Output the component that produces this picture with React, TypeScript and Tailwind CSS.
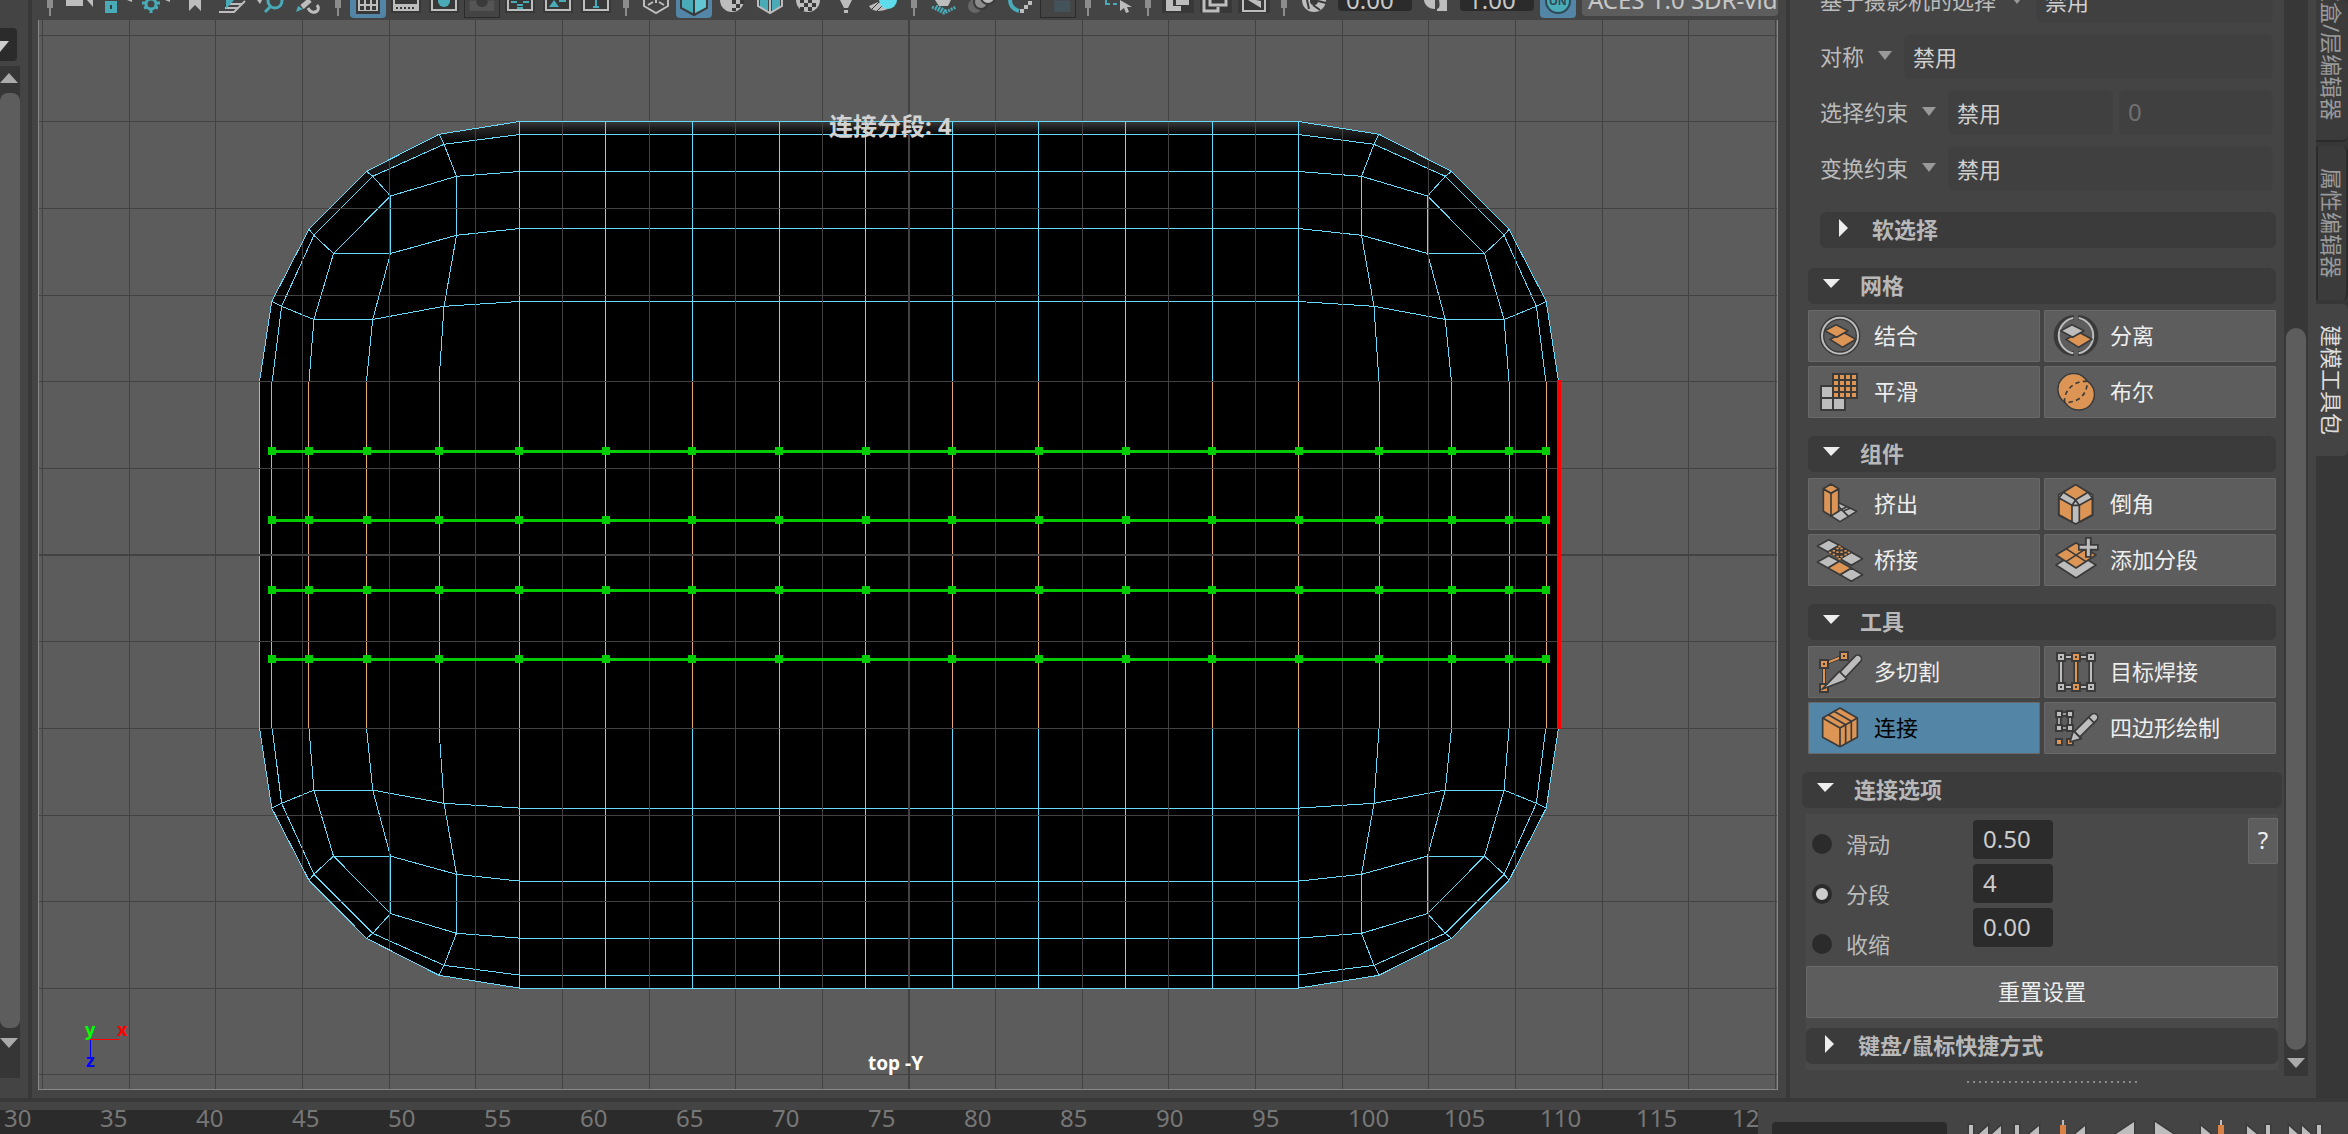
import React from "react";

type IconProps = { children: React.ReactNode };

type Tool = {
  label: string;
  icon: React.ReactNode;
  active?: boolean;
};

const CX = 909;
const CY = 554.8;
const STEP = 86.64;

const DARK = "#3a3a3a";
const ORANGE = "#dc9555";
const GRAY = "#bdbdbd";
const TEAL = "#4aabb8";

// top-left quarter of the mesh, mirrored for the other three corners
const OUTLINE = "259.5,381.5 271.8,301.3 309,229.3 366.5,171.3 439,134.3 519.5,121.5";
const CORNER_LINES = [
  "272.2,381.5 281.6,306.3 313.9,235.3 372.7,176.3 444,144.3 519.5,134.5",
  "309,381.5 313.9,319.5 333.5,253.5",
  "309,229.3 313.9,235.3 333.5,253.5 390.5,253.5 456.5,235.3 519.5,228.5",
  "333.5,253.5 390.5,196 456.5,176.3 519.5,171.5",
  "366.5,381.5 372.7,319.5 390.5,253.5 390.5,196 372.7,176.3 366.5,171.3",
  "439,381.5 444,306.3 456.5,235.3 456.5,176.3 444,144.3 439,134.3",
  "271.8,301.3 281.6,306.3 313.9,319.5 372.7,319.5 444,306.3 519.5,301.5",
];
const ROWS = [134.5, 171.5, 228.5, 301.5];
const EDGE_XS = [271.8, 308.8, 366.5, 439];
const COLS = Array.from({ length: 10 }, (_, i) => CX - 4.5 * STEP + i * STEP);
const MIDS = [...EDGE_XS, ...COLS, ...EDGE_XS.map((x) => 2 * CX - x).reverse()];
const CUTS = [1, 2, 3, 4].map((n) => 381.3 + n * 69.4);
const MIRRORS = [
  "",
  `translate(${2 * CX} 0) scale(-1 1)`,
  `translate(0 ${2 * CY}) scale(1 -1)`,
  `translate(${2 * CX} ${2 * CY}) scale(-1 -1)`,
];

const Viewport: React.FC = () => (
  <svg
    viewBox="39 20 1738 1069"
    preserveAspectRatio="xMidYMid slice"
    className="absolute inset-0 h-full w-full bg-[#5c5c5c]"
    fill="none"
    shapeRendering="crispEdges"
  >
    <defs>
      <linearGradient id="rim" x1="0" y1="0" x2="0" y2="1">
        <stop offset="0" stopColor="#383838" />
        <stop offset="1" stopColor="#000" />
      </linearGradient>
    </defs>
    {MIRRORS.map((m) => (
      <polygon key={m} transform={m} points={`${OUTLINE} 910,121.5 910,556 259.5,556`} fill="#000" />
    ))}
    <rect x="519" y="122" width="780" height="13" fill="url(#rim)" />
    {MIRRORS.slice(0, 2).map((m) => (
      <g key={m} transform={m}>
        <polygon points="519.5,121.5 439,134.3 444,144.3 519.5,134.5" fill="url(#rim)" />
        <polygon points="439,134.3 366.5,171.3 372.7,176.3 444,144.3" fill="#181818" />
        <polygon points="366.5,171.3 309,229.3 313.9,235.3 372.7,176.3" fill="#0c0c0c" />
      </g>
    ))}

    <g stroke="#67d9fb">
      {MIRRORS.map((m) => (
        <g key={m} transform={m}>
          {CORNER_LINES.map((p) => (
            <polyline key={p} points={p} />
          ))}
        </g>
      ))}
      {ROWS.map((y) => (
        <path key={y} d={`M519 ${y}H1299M519 ${2 * CY - y}H1299`} />
      ))}
      {COLS.map((x) => (
        <path key={x} d={`M${x} 121V382M${x} 728V988`} />
      ))}
    </g>
    <g stroke="#e9a873">
      <path d="M259.5 382V728" />
      {MIDS.map((x) => (
        <path key={x} d={`M${x} 382V728`} />
      ))}
    </g>

    <g stroke="#424242">
      {Array.from({ length: 21 }, (_, i) => i - 10).map((i) => (
        <path key={i} d={`M${CX + i * STEP} 20V1090`} strokeWidth={i === 0 ? 2 : 1} />
      ))}
      {Array.from({ length: 13 }, (_, i) => i - 6).map((i) => (
        <path key={i} d={`M39 ${CY + i * STEP + 0.3}H1778`} strokeWidth={i === 0 ? 2 : 1} />
      ))}
    </g>
    <g stroke="#67d9fb">
      {MIRRORS.map((m) => (
        <polyline key={m} transform={m} points={`${OUTLINE} 910,121.5`} />
      ))}
    </g>

    {CUTS.map((y) => (
      <g key={y}>
        <path d={`M272 ${y + 0.5}H1546`} stroke="#00cc00" strokeWidth="3" />
        {MIDS.map((x) => (
          <rect key={x} x={x - 4} y={y - 4} width="8" height="8" fill="#00cc00" />
        ))}
      </g>
    ))}
    <path d="M1559 380V729" stroke="#ff0000" strokeWidth="4" />

    <path d="M90 1039.5H119" stroke="#ff0000" />
    <path d="M90.5 1040V1058" stroke="#0000ff" />
    <g className="font-bold" fontSize="18">
      <text x="85" y="1036" fill="#00ff00">y</text>
      <text x="117" y="1036" fill="#ff0000">x</text>
      <text x="86" y="1067" fill="#0000ff">z</text>
    </g>
    <text x="868" y="1070" fontSize="19" fill="#fff" className="font-bold">top -Y</text>
    <text x="829" y="135" fontSize="24" fill="#d2d2d2" className="font-bold">连接分段: 4</text>
  </svg>
);

/* ---------- tool button icons ---------- */

const ToolIcon: React.FC<IconProps> = ({ children }) => (
  <svg viewBox="0 0 144 156" className="h-13 w-12 shrink-0" fill="none" stroke={DARK} strokeWidth="5" strokeLinejoin="round">
    {children}
  </svg>
);

const Vertex: React.FC<{ x: number; y: number; color?: string }> = ({ x, y, color = GRAY }) => (
  <g stroke="none">
    <rect x={x - 15} y={y - 15} width="30" height="30" fill={DARK} />
    <rect x={x - 9} y={y - 9} width="18" height="18" fill={color} />
    <rect x={x - 3} y={y - 3} width="6" height="6" fill={DARK} />
  </g>
);

const CombineIcon = () => (
  <ToolIcon>
    <circle cx="72" cy="77" r="54" strokeWidth="14" />
    <circle cx="72" cy="77" r="54" stroke={GRAY} strokeWidth="6" />
    <path d="M42 88L84 68L120 88L80 112Z" fill={ORANGE} />
    <path d="M26 62L60 44L96 62L62 82Z" fill={ORANGE} />
  </ToolIcon>
);

const SeparateIcon = () => (
  <ToolIcon>
    <path d="M66 23A54 54 0 0 0 66 131M78 23A54 54 0 0 1 78 131" strokeWidth="14" />
    <path d="M64 24A54 54 0 0 0 64 130M80 24A54 54 0 0 1 80 130" stroke={GRAY} strokeWidth="6" />
    <path d="M42 88L84 68L120 88L80 112Z" fill={ORANGE} />
    <path d="M26 62L60 44L96 62L62 82Z" fill={GRAY} />
  </ToolIcon>
);

const SmoothIcon = () => (
  <ToolIcon>
    <g stroke="none">
      <path d="M12 57H60V93H90V135H12Z" fill={DARK} />
      <path d="M18 63h30v30h-30zM18 99h30v30h-30zM54 99h30v30h-30z" fill={GRAY} />
      <rect x="48" y="21" width="78" height="78" fill={DARK} />
      {[27, 45, 63, 81].map((y) =>
        [54, 72, 90, 108].map((x) => <rect key={`${x}-${y}`} x={x} y={y} width="12" height="12" fill={ORANGE} />)
      )}
    </g>
  </ToolIcon>
);

const BooleanIcon = () => (
  <ToolIcon>
    <circle cx="65" cy="70" r="47" />
    <circle cx="80" cy="85" r="47" />
    <circle cx="65" cy="70" r="45" fill={ORANGE} stroke="none" />
    <circle cx="80" cy="85" r="45" fill={ORANGE} stroke="none" />
    <path d="M38 109C34 80 60 44 104 46C110 74 86 112 38 109Z" strokeDasharray="13 10" />
  </ToolIcon>
);

const ExtrudeIcon = () => (
  <ToolIcon>
    <path d="M68 74L122 100L72 131L45 114Z" fill={GRAY} />
    <path d="M56 106L92 86M68 86L98 116M84 98L104 90" />
    <path d="M22 32L45 46V114L22 100ZM45 46L68 32V100L45 114Z" fill={ORANGE} />
    <path d="M45 18L68 32L45 46L22 32Z" fill={ORANGE} />
  </ToolIcon>
);

const BevelIcon = () => (
  <ToolIcon>
    <path d="M71 20L122 50V112L71 138L20 112V50Z" fill={GRAY} />
    <path d="M71 20L108 43L71 65L34 43Z" fill={ORANGE} />
    <path d="M21 60L60 82V132L21 110ZM121 60L82 82V132L121 110Z" fill={ORANGE} />
    <path d="M60 82L71 67L82 82ZM71 65L60 82M34 43L21 60M108 43L121 60" />
  </ToolIcon>
);

const BRIDGE_DOTS = [
  [53, 50], [64, 43], [76, 43], [88, 50], [42, 55], [64, 54], [76, 54], [98, 55],
  [53, 61], [64, 67], [76, 67], [88, 61], [70, 37], [70, 74],
];

const BridgeIcon = () => (
  <ToolIcon>
    <path d="M4 36L38 17L70 34L36 54ZM72 74L106 55L140 74L106 94Z" fill={GRAY} />
    <path d="M36 54L70 34L106 55L72 74Z" fill={DARK} />
    {BRIDGE_DOTS.map(([x, y]) => (
      <rect key={`${x}-${y}`} x={x - 3} y={y - 2} width="7" height="5" fill={ORANGE} stroke="none" />
    ))}
    <path d="M4 84L38 65L70 82L36 102ZM72 122L106 102L140 122L106 142Z" fill={GRAY} />
    <path d="M36 102L70 82L106 102L72 122Z" fill={ORANGE} />
  </ToolIcon>
);

const AddDivisionsIcon = () => (
  <ToolIcon>
    <path d="M12 93L72 56L132 93L72 132Z" fill={GRAY} />
    <path d="M12 63L72 26L132 63L72 102Z" fill={ORANGE} />
    <path d="M42 44L102 83M102 44L42 83" />
    <path d="M109 9V71M78 40H140" strokeWidth="20" />
    <path d="M109 14V66M83 40H135" stroke={GRAY} strokeWidth="9" />
  </ToolIcon>
);

const MultiCutIcon = () => (
  <ToolIcon>
    <path d="M24 54V126M24 54L84 30" strokeWidth="12" />
    <path d="M24 54V126M24 54L84 30" stroke={ORANGE} strokeWidth="6" />
    <Vertex x={24} y={54} color={ORANGE} />
    <Vertex x={84} y={30} color={ORANGE} />
    <Vertex x={24} y={126} color={ORANGE} />
    <path d="M84 82L125 39" strokeWidth="28" strokeLinecap="round" />
    <path d="M84 82L125 39" stroke={GRAY} strokeWidth="18" strokeLinecap="round" />
    <path d="M18 130L70 76L92 98L84 104Z" fill={GRAY} />
  </ToolIcon>
);

const TargetWeldIcon = () => (
  <ToolIcon>
    <path d="M27 33V123M72 33V123M117 33V123M27 33H117M27 123H117" strokeWidth="16" />
    <path d="M27 33V123M117 33V123M27 33H117M27 123H117" stroke={GRAY} strokeWidth="6" />
    <path d="M72 33V123" stroke={ORANGE} strokeWidth="6" />
    {[27, 72, 117].map((x) => (
      <g key={x}>
        <Vertex x={x} y={33} color={x === 72 ? ORANGE : GRAY} />
        <Vertex x={x} y={123} color={x === 72 ? ORANGE : GRAY} />
      </g>
    ))}
  </ToolIcon>
);

const ConnectIcon = () => (
  <ToolIcon>
    <path d="M72 18L124 48V106L72 134L20 106V48Z" fill={ORANGE} />
    <path d="M20 48L72 78L124 48M72 78V134M37 38L89 68V124M54 28L106 58V115" />
  </ToolIcon>
);

const QuadDrawIcon = () => (
  <ToolIcon>
    <path d="M21 36H54V78H21Z" strokeWidth="16" />
    <path d="M21 36H54V78H21Z" stroke={GRAY} />
    <g stroke="none">
      {[[21, 36], [54, 36], [21, 78], [54, 78]].map(([x, y]) => (
        <g key={`${x}-${y}`}>
          <rect x={x - 12} y={y - 12} width="24" height="24" fill={DARK} />
          <rect x={x - 6} y={y - 6} width="12" height="12" fill={GRAY} />
        </g>
      ))}
      <path d="M9 108h24v24H9zM42 108h24v24H42z" fill={DARK} />
      <path d="M15 114h12v12H15zM48 114h12v12H48z" fill={ORANGE} />
    </g>
    <path d="M78 94L126 46" strokeWidth="28" strokeLinecap="round" />
    <path d="M78 94L126 46" stroke={GRAY} strokeWidth="18" strokeLinecap="round" />
    <path d="M54 120L64 86L88 110Z" fill={GRAY} />
    <path d="M64 86L88 110M108 44L128 64" />
  </ToolIcon>
);

const meshTools: Tool[] = [
  { label: "结合", icon: <CombineIcon /> },
  { label: "分离", icon: <SeparateIcon /> },
  { label: "平滑", icon: <SmoothIcon /> },
  { label: "布尔", icon: <BooleanIcon /> },
];

const componentTools: Tool[] = [
  { label: "挤出", icon: <ExtrudeIcon /> },
  { label: "倒角", icon: <BevelIcon /> },
  { label: "桥接", icon: <BridgeIcon /> },
  { label: "添加分段", icon: <AddDivisionsIcon /> },
];

const editTools: Tool[] = [
  { label: "多切割", icon: <MultiCutIcon /> },
  { label: "目标焊接", icon: <TargetWeldIcon /> },
  { label: "连接", icon: <ConnectIcon />, active: true },
  { label: "四边形绘制", icon: <QuadDrawIcon /> },
];

/* ---------- panel toolbar ---------- */

const Cell: React.FC<{ label: string; on?: boolean; off?: boolean; children: React.ReactNode }> = ({ label, on, off, children }) => (
  <button
    aria-label={label}
    className={`h-[18px] w-9 shrink-0 ${on ? "rounded-b-sm bg-[#5285a6]" : ""} ${off ? "border border-t-0 border-[#2b2b2b]" : ""}`}
  >
    <svg viewBox="0 0 36 18" className="h-[18px] w-full" fill="none" stroke={GRAY} strokeWidth="2">
      {children}
    </svg>
  </button>
);

const Separator = () => (
  <div className="flex h-4 w-5 shrink-0 flex-col items-center">
    <div className="h-2 w-1.5 bg-[#8c8c8c]" />
    <div className="h-2 w-0.5 bg-[#8c8c8c]" />
  </div>
);

const Backing: React.FC<{ w?: number }> = ({ w = 30 }) => (
  <rect x={18 - w / 2} y="0" width={w} height="13" fill="#383838" stroke="none" />
);

const ToolbarValue: React.FC<{ label: string; value: string }> = ({ label, value }) => (
  <input
    aria-label={label}
    defaultValue={value}
    className="mx-1 -mt-5 h-[31px] w-[74px] shrink-0 rounded-sm bg-[#2b2b2b] pt-2 pl-2 text-2xl leading-6 text-[#c8c8c8]"
  />
);

const Toolbar: React.FC = () => (
  <div className="flex h-5 items-start gap-0.5 overflow-hidden pl-2">
    <Separator />
    <Cell label="摄影机">
      <path d="M4 0H21V6H4ZM25 0L31 7V0Z" fill={GRAY} stroke="none" />
    </Cell>
    <Cell label="锁定摄影机">
      <rect x="5" y="1" width="12" height="12" fill={TEAL} stroke="none" />
      <path d="M11 5V9" stroke={DARK} />
      <path d="M27 0H32V2Z" fill={GRAY} stroke="none" />
    </Cell>
    <Cell label="摄影机属性">
      <circle cx="13" cy="4" r="5" stroke={TEAL} strokeWidth="3" />
      <path d="M13 9V13M6 8L9 7M20 8L17 7M4 3H8M22 3H18" stroke={TEAL} strokeWidth="3" />
      <path d="M27 0H32V2Z" fill={GRAY} stroke="none" />
    </Cell>
    <Cell label="书签">
      <path d="M13 0H25V11L19 5L13 11Z" fill={GRAY} stroke="none" />
    </Cell>
    <Cell label="图像平面">
      <path d="M5 12H20L31 1M11 8H24M14 4H28" />
      <path d="M12 9V0H20Z" fill={TEAL} stroke="none" />
    </Cell>
    <Cell label="二维平移/缩放">
      <circle cx="23" cy="1" r="7" stroke={TEAL} strokeWidth="3" />
      <path d="M18 7L13 12" stroke={TEAL} strokeWidth="3" />
      <path d="M5 0H10L8 4Z" fill={GRAY} stroke="none" />
    </Cell>
    <Cell label="油性铅笔">
      <path d="M20 0L12 7" strokeWidth="5" />
      <path d="M18 8C22 16 32 11 27 5" strokeWidth="3" />
      <path d="M6 12L8 6L13 9Z" fill={TEAL} stroke="none" />
    </Cell>
    <Separator />
    <Cell label="栅格" on>
      <rect x="6" y="0" width="24" height="14" fill="#383838" stroke="none" />
      <path d="M8 0H28V11H8Z" fill={GRAY} stroke="none" />
      <path d="M10 0h4v4h-4zM16 0h4v4h-4zM22 0h4v4h-4zM10 6h4v4h-4zM16 6h4v4h-4zM22 6h4v4h-4z" fill="#383838" stroke="none" />
    </Cell>
    <Cell label="胶片门">
      <Backing />
      <path d="M5 0H31V11H5Z" fill={GRAY} stroke="none" />
      <path d="M7 0H29V4H7ZM8 7h2v2h-2zM12 7h2v2h-2zM16 7h2v2h-2zM20 7h2v2h-2zM24 7h2v2h-2z" fill="#383838" stroke="none" />
    </Cell>
    <Cell label="分辨率门">
      <Backing />
      <path d="M6 0V10H30V0" />
      <circle cx="18" cy="1" r="6" fill={TEAL} stroke="none" />
    </Cell>
    <Cell label="门遮罩" off>
      <rect x="5" y="0" width="26" height="11" fill="#555" stroke="none" />
      <circle cx="18" cy="1" r="6" fill={DARK} stroke="none" />
    </Cell>
    <Cell label="区域图">
      <Backing />
      <path d="M6 0V10H30V0" />
      <path d="M9 2H15M21 2H27M15 5H21M15 8H21" stroke={TEAL} />
    </Cell>
    <Cell label="安全动作">
      <Backing />
      <path d="M6 0V10H30V0" />
      <path d="M9 7L14 0L19 7ZM19 0H26V2H19Z" fill={TEAL} stroke="none" />
    </Cell>
    <Cell label="安全标题">
      <Backing />
      <path d="M6 0V10H30V0" />
      <path d="M18 0V7M15 7H21" stroke={TEAL} />
    </Cell>
    <Separator />
    <Cell label="线框">
      <path d="M6 0V6L18 13L30 6V0M18 0V3M10 5L15 2M26 5L21 2" />
    </Cell>
    <Cell label="平滑着色" on>
      <path d="M5 0H18V15L5 8Z" fill={TEAL} stroke="none" />
      <path d="M31 0H18V15L31 8Z" fill="#62c5d2" stroke="none" />
      <path d="M5 0V8L18 15L31 8V0M18 0V15" stroke={DARK} />
    </Cell>
    <Cell label="默认材质">
      <path d="M6 0A12 12 0 0 0 30 0Z" fill={GRAY} stroke="none" />
      <path d="M18 0H22V4H18ZM22 4H26V8H22ZM26 0H30V4H26ZM18 8H22V11H18Z" fill={DARK} stroke="none" />
    </Cell>
    <Cell label="着色对象上的线框">
      <path d="M8 0H16V11L8 7ZM20 0H28V7L20 11Z" fill={TEAL} stroke="none" />
      <path d="M6 0V6L18 13L30 6V0M18 0V12" />
    </Cell>
    <Cell label="带纹理">
      <path d="M6 0A12 12 0 0 0 30 0Z" fill={GRAY} stroke="none" />
      <path d="M10 0h4v3h-4zM18 0h4v3h-4zM14 3h4v4h-4zM22 3h4v4h-4zM10 7h4v4h-4zM18 7h4v4h-4z" fill={DARK} stroke="none" />
    </Cell>
    <Cell label="使用所有灯光">
      <path d="M12 0H24L20 8H16ZM16 10H20V13H16Z" fill={GRAY} stroke="none" />
    </Cell>
    <Cell label="阴影">
      <path d="M3 6L12 2L22 9C14 12 6 12 3 6Z" fill={GRAY} stroke="none" />
      <path d="M6 9L14 1M11 11L18 4" stroke={DARK} strokeWidth="1" />
      <circle cx="22" cy="0" r="9" fill="#5fdcec" stroke="none" />
    </Cell>
    <Separator />
    <Cell label="屏幕空间环境光遮挡">
      <path d="M9 0H25L22 6H13Z" fill={GRAY} stroke="none" />
      <path d="M6 7L18 13L30 7M10 6L20 11" stroke={TEAL} strokeWidth="3" strokeDasharray="2 1" />
    </Cell>
    <Cell label="运动模糊">
      <circle cx="11" cy="6" r="7" fill="#666" stroke="none" />
      <circle cx="17" cy="2" r="7" fill="#8c8c8c" stroke={DARK} />
      <circle cx="24" cy="-3" r="7" fill={GRAY} stroke={DARK} />
    </Cell>
    <Cell label="多采样抗锯齿">
      <path d="M8 0C8 5 11 9 17 11" stroke={TEAL} strokeWidth="4" />
      <path d="M18 9h4v4h-4zM22 5h4v4h-4zM26 1h4v4h-4z" fill={GRAY} stroke="none" />
    </Cell>
    <Cell label="景深" off>
      <rect x="14" y="0" width="17" height="12" fill="#435359" stroke="none" />
    </Cell>
    <Separator />
    <Cell label="隔离选择">
      <path d="M6 0V4H10M13 4H17" stroke={TEAL} />
      <path d="M20 0L32 7H27L29 12L26 13L24 8L20 11Z" fill={GRAY} stroke="none" />
    </Cell>
    <Separator />
    <Cell label="X 射线显示">
      <Backing w={32} />
      <path d="M6 0H13V6H21V11H6ZM16 0H29V5H16Z" fill={GRAY} stroke="none" />
    </Cell>
    <Cell label="X 射线显示活动组件">
      <Backing w={32} />
      <path d="M6 0V11H20V7M12 0V5H28V0" strokeWidth="3" />
    </Cell>
    <Cell label="X 射线显示关节">
      <Backing w={32} />
      <path d="M7 0V11H29V0" />
      <path d="M12 0L25 8V1L20 0Z" fill={GRAY} stroke="none" />
    </Cell>
    <Separator />
    <Cell label="曝光">
      <path d="M6 0A12 12 0 0 0 30 0Z" fill={GRAY} stroke="none" />
      <circle cx="18" cy="1" r="4" fill={DARK} stroke="none" />
      <path d="M11 0L13 9M17 5L24 10M22 1L30 3" stroke={DARK} />
    </Cell>
    <ToolbarValue label="曝光值" value="0.00" />
    <Cell label="Gamma">
      <path d="M17 0V9C10 9 6 4 6 0Z" fill={GRAY} stroke="none" />
      <path d="M21 0H29V11H19V9C22 8 22 5 21 0Z" fill={GRAY} stroke="none" />
    </Cell>
    <ToolbarValue label="Gamma 值" value="1.00" />
    <Cell label="颜色管理" on>
      <circle cx="18" cy="1" r="12" fill={TEAL} stroke="#2f4a55" />
      <text x="9" y="5" fontSize="11" fontWeight="700" fill="#2f4a55" stroke="none">ON</text>
    </Cell>
    <button className="-mt-5 mr-2 ml-1 h-9 flex-1 overflow-hidden rounded-sm bg-[#5d5d5d] pl-1.5 text-left text-2xl leading-10 whitespace-nowrap text-[#c8c8c8]">
      ACES 1.0 SDR-video
    </button>
  </div>
);

/* ---------- modeling toolkit ---------- */

const Caret: React.FC<{ open?: boolean }> = ({ open }) => (
  <svg viewBox="0 0 18 18" className="mb-0.5 h-[18px] w-[18px] shrink-0" fill="#eee">
    <path d={open ? "M1 4H18L9 13Z" : "M5 0L14 9L5 18Z"} />
  </svg>
);

const Header: React.FC<{ title: string; open?: boolean; className?: string }> = ({ title, open, className = "" }) => (
  <button className={`flex h-9 items-center gap-5 rounded-md bg-[#3b3b3b] pb-0.5 pl-3.5 text-left font-bold text-[#b8b8b8] ${className}`}>
    <Caret open={open} />
    {title}
  </button>
);

const Field: React.FC<{ label: string; value: string; className: string }> = ({ label, value, className }) => (
  <input
    aria-label={label}
    defaultValue={value}
    className={`h-[45px] min-w-0 rounded-md border border-[#414141] bg-[#404040] pb-0.5 pl-2 ${className}`}
  />
);

const Option: React.FC<{ label: string; children?: React.ReactNode }> = ({ label, children }) => (
  <div className="flex h-[45px] items-center">
    <button className="mr-3 flex items-center gap-3.5 pb-0.5 text-[#bbb]">
      {label}
      <svg viewBox="0 0 14 10" className="h-2.5 w-3.5" fill="#999">
        <path d="M0 0H14L7 9Z" />
      </svg>
    </button>
    <Field label={label} value="禁用" className="flex-1 text-[#d0d0d0]" />
    {children}
  </div>
);

const ToolGroup: React.FC<{ title: string; tools: Tool[] }> = ({ title, tools }) => (
  <section className="mr-2 ml-[18px] flex flex-col">
    <Header title={title} open />
    <div className="mt-1.5 grid grid-cols-2 gap-1">
      {tools.map((tool) => (
        <button
          key={tool.label}
          className={`flex h-13 items-center gap-2.5 rounded-xs pl-2 ring-1 ring-[#696969] ring-inset ${
            tool.active ? "bg-[#5285a6] text-black" : "bg-[#5d5d5d] text-[#eee]"
          }`}
        >
          {tool.icon}
          <span className="pb-0.5">{tool.label}</span>
        </button>
      ))}
    </div>
  </section>
);

const connectOptions = [
  { id: "slide", label: "滑动", value: "0.50" },
  { id: "segments", label: "分段", value: "4" },
  { id: "pinch", label: "收缩", value: "0.00" },
];

const ConnectOptions: React.FC = () => (
  <section className="mr-0.5 ml-3 flex flex-col">
    <Header title="连接选项" open />
    <div className="mx-1 mt-1.5 flex flex-col bg-[#494949] pb-1.5">
      <div className="flex items-start pb-[7px]">
        <div className="flex w-[167px] flex-col gap-5 pt-[15px] pl-1.5">
          {connectOptions.map((o) => (
            <label key={o.id} className="flex h-[30px] items-center gap-3.5 text-[#bbb]">
              <input
                type="radio"
                name="connect"
                defaultChecked={o.id === "segments"}
                className="h-5 w-5 appearance-none rounded-full bg-[#2b2b2b] checked:border-4 checked:border-[#2b2b2b] checked:bg-[#ccc]"
              />
              {o.label}
            </label>
          ))}
        </div>
        <div className="flex flex-col gap-[5px] pt-1.5">
          {connectOptions.map((o) => (
            <input
              key={o.id}
              aria-label={o.label}
              defaultValue={o.value}
              className="h-[39px] w-20 rounded-sm bg-[#2b2b2b] pb-0.5 pl-2.5 text-2xl text-[#ccc]"
            />
          ))}
        </div>
        <button className="mt-1 ml-auto h-[46px] w-[30px] rounded-xs bg-[#5d5d5d] pb-0.5 text-2xl text-[#eee] ring-1 ring-[#696969] ring-inset">?</button>
      </div>
      <button className="mb-2.5 h-13 rounded-xs bg-[#5d5d5d] pb-0.5 text-[#eee] ring-1 ring-[#696969] ring-inset">重置设置</button>
      <Header title="键盘/鼠标快捷方式" />
    </div>
  </section>
);

const Toolkit: React.FC = () => (
  <aside className="flex w-[494px] shrink-0 flex-col overflow-hidden bg-[#444]">
    <div className="-mt-[22px] flex flex-col gap-[11px] pr-[11px] pl-[30px]">
      <Option label="基于摄影机的选择" />
      <Option label="对称" />
      <Option label="选择约束">
        <Field label="约束值" value="0" className="ml-1.5 w-[154px] text-2xl text-[#707070]" />
      </Option>
      <Option label="变换约束" />
    </div>
    <Header title="软选择" className="mt-[21px] mr-2 ml-[30px]" />
    <div className="mt-5 flex flex-col gap-[18px]">
      <ToolGroup title="网格" tools={meshTools} />
      <ToolGroup title="组件" tools={componentTools} />
      <ToolGroup title="工具" tools={editTools} />
      <ConnectOptions />
    </div>
    <svg viewBox="0 0 172 2" className="mt-[11px] ml-[177px] h-0.5 w-[172px]">
      <path d="M0 1H172" stroke="#8a8a8a" strokeWidth="2" strokeDasharray="2 4" />
    </svg>
  </aside>
);

const Arrow: React.FC<{ up?: boolean }> = ({ up }) => (
  <svg viewBox="0 0 18 10" className="h-2.5 w-[18px]" fill="#aaa">
    <path d={up ? "M0 10H18L9 0Z" : "M0 0H18L9 10Z"} />
  </svg>
);

const SideTabs: React.FC = () => (
  <nav className="flex w-8 shrink-0 flex-col gap-1 overflow-hidden bg-[#373737] whitespace-nowrap">
    <button className="flex h-[142px] w-8 shrink-0 items-center justify-end rounded-r-md border-b-2 border-[#2b2b2b] bg-[#3b3b3b] pb-5 text-[#999] [text-orientation:sideways] [writing-mode:vertical-rl]">
      通道盒/层编辑器
    </button>
    <button className="flex h-[154px] w-8 shrink-0 items-center justify-center rounded-r-md border-y-2 border-[#2b2b2b] bg-[#3b3b3b] text-[#999] [text-orientation:sideways] [writing-mode:vertical-rl]">
      属性编辑器
    </button>
    <button className="flex h-[152px] w-8 shrink-0 items-center justify-center rounded-r-md bg-[#444] text-[#ddd] [text-orientation:sideways] [writing-mode:vertical-rl]">
      建模工具包
    </button>
  </nav>
);

/* ---------- timeline ---------- */

const ticks = Array.from({ length: 19 }, (_, i) => 30 + i * 5);

const playback = [
  { label: "转到开始", d: "M4 5H8V16H4ZM23 6V16H12ZM36 6V16H25Z" },
  { label: "后退一帧", d: "M4 5H8V16H4ZM28 6V16H16Z" },
  { label: "上一关键帧", d: "M28 6V16H16Z", key: 6 },
  { label: "向后播放", d: "M31 2V16H10Z" },
  { label: "向前播放", d: "M6 2V16H27Z" },
  { label: "下一关键帧", d: "M6 6V16H18Z", key: 26 },
  { label: "前进一帧", d: "M6 6V16H18ZM25 5H29V16H25Z" },
  { label: "转到结束", d: "M2 6V16H13ZM15 6V16H26ZM30 5H34V16H30Z" },
];

const Timeline: React.FC = () => (
  <footer className="flex h-8 shrink-0 overflow-hidden bg-[#444] pt-2">
    <div className="flex h-6 min-w-0 flex-1 overflow-hidden bg-[#2b2b2b] pl-1 text-2xl leading-4 text-[#777]">
      {ticks.map((t) => (
        <span key={t} className="w-24 shrink-0">{t}</span>
      ))}
    </div>
    <input
      aria-label="当前帧"
      defaultValue="1"
      className="mt-3 ml-[14px] h-10 w-[175px] shrink-0 rounded-sm bg-[#2b2b2b] pl-3 text-2xl text-[#ccc]"
    />
    <div className="flex w-[401px] shrink-0 gap-2 pt-2.5 pl-[18px]">
      {playback.map((p) => (
        <button key={p.label} aria-label={p.label} className="h-4 w-[38px] shrink-0">
          <svg viewBox="0 0 38 16" className="h-4 w-[38px]">
            <path d={p.d} fill={GRAY} stroke={DARK} strokeWidth="3" paintOrder="stroke" />
            {p.key && (
              <>
                <path d={`M${p.key} 0V6`} stroke={GRAY} strokeWidth="2" />
                <rect x={p.key - 3} y="5" width="6" height="11" fill="#d98246" />
              </>
            )}
          </svg>
        </button>
      ))}
    </div>
  </footer>
);

const App: React.FC = () => {
  return (
    <div className="flex h-screen flex-col overflow-hidden bg-[#444] font-['Noto_Sans','Noto_Sans_CJK_SC',sans-serif] text-[22px] leading-8">
      <main className="flex min-h-0 flex-1">
        <div className="flex w-7 shrink-0 flex-col">
          <button aria-label="选项" className="mt-7 h-[33px] w-[17px] rounded-r-sm bg-[#2b2b2b]">
            <svg viewBox="0 0 17 33" className="h-full w-full" fill="#ccc">
              <path d="M0 13H9L0 24Z" />
            </svg>
          </button>
          <div className="mt-[5px] mb-5 flex w-5 flex-1 flex-col bg-[#363636]">
            <div className="pt-[7px] pb-2.5">
              <Arrow up />
            </div>
            <div className="flex-1 rounded-t-lg rounded-b-lg bg-[#5d5d5d]" />
            <div className="h-[50px] pt-2.5">
              <Arrow />
            </div>
          </div>
        </div>
        <div className="w-1 shrink-0 bg-[#383838]" />
        <div className="flex min-w-0 flex-1 flex-col">
          <Toolbar />
          <div className="relative mr-2 mb-2 ml-1.5 flex-1 overflow-hidden border border-t-0 border-[#888]">
            <Viewport />
          </div>
        </div>
        <div className="w-1 shrink-0 bg-[#383838]" />
        <Toolkit />
        <div className="mb-[22px] flex w-6 shrink-0 flex-col items-center bg-[#373737]">
          <div className="mt-[328px] w-5 flex-1 rounded-full bg-[#5d5d5d]" />
          <div className="flex h-[26px] items-center">
            <Arrow />
          </div>
        </div>
        <div className="w-2 shrink-0" />
        <SideTabs />
      </main>
      <div className="h-1 shrink-0 bg-[#383838]" />
      <Timeline />
    </div>
  );
};

export default App;
